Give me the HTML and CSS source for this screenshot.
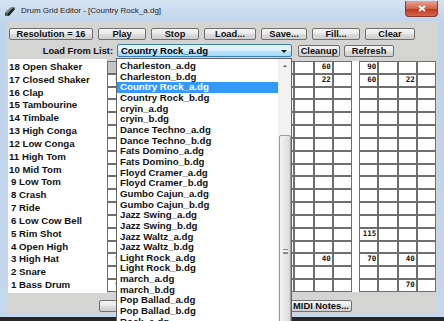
FILE: index.html
```html
<!DOCTYPE html>
<html lang="en">
<head>
  <meta charset="UTF-8">
  <title>Drum Grid Editor</title>
  <link rel="stylesheet" href="styles.css">
</head>
<body>
  <div class="window">
    <div class="titlebar">
      <svg class="app-icon" viewBox="0 0 11 10" width="11" height="10">
        <path d="M0 6 L6 1 L10 1 L10 3 L3 9 L0 9 Z" fill="#7d8f86"/>
        <path d="M1 9 L8 2 L10 3 L4 10 Z" fill="#1c1c1c"/>
        <rect x="0" y="7" width="3" height="3" fill="#2f6f3a"/>
      </svg>
      <span class="title">Drum Grid Editor - [Country Rock_a.dg]</span>
      <div class="close-btn">
        <svg viewBox="0 0 8 7" width="8" height="7">
          <path d="M1 1 L7 6 M7 1 L1 6" stroke="#fff" stroke-width="1.8"/>
        </svg>
      </div>
    </div>

    <div class="client">
      <div class="toolbar">
        <button class="btn w-res">Resolution = 16</button>
        <button class="btn w-play">Play</button>
        <button class="btn w-stop">Stop</button>
        <button class="btn w-load">Load...</button>
        <button class="btn w-save">Save...</button>
        <button class="btn w-fill">Fill...</button>
        <button class="btn w-clear">Clear</button>
      </div>

      <div class="load-row">
        <span class="load-label">Load From List:</span>
        <div class="combo">
          <span>Country Rock_a.dg</span>
          <span class="combo-arrow"></span>
        </div>
        <button class="btn w-cleanup">Cleanup</button>
        <button class="btn w-refresh">Refresh</button>
      </div>

      <div class="editor">
        <ul class="names" id="names"></ul>
        <div class="grid" id="grid"></div>
      </div>

      <div class="bottom-bar">
        <button class="btn w-random">Random...</button>
        <button class="btn w-midi">MIDI Notes...</button>
      </div>

      <div class="drop-list">
        <ul class="drop-items" id="dropItems"></ul>
        <div class="scrollbar">
          <div class="scroll-up"></div>
          <div class="scroll-thumb"><span class="grip"></span></div>
        </div>
      </div>
    </div>
  </div>

  <script>
    var names = ["18 Open Shaker", "17 Closed Shaker", "16 Clap", "15 Tambourine", "14 Timbale",
      "13 High Conga", "12 Low Conga", "11 High Tom", "10 Mid Tom", "9 Low Tom", "8 Crash",
      "7 Ride", "6 Low Cow Bell", "5 Rim Shot", "4 Open High", "3 High Hat", "2 Snare", "1 Bass Drum"];

    // row -> { column: value }
    var hits = {
      0: { 2: "60", 4: "90", 10: "60", 12: "90" },
      1: { 0: "60", 2: "22", 4: "60", 6: "22", 8: "60", 10: "22", 12: "60", 14: "22" },
      13: { 12: "115" },
      15: { 0: "90", 2: "40", 4: "70", 6: "40", 8: "90", 10: "40", 12: "70", 14: "40" },
      17: { 0: "90", 4: "70", 8: "90", 14: "70" }
    };

    var styles = ["Charleston_a.dg", "Charleston_b.dg", "Country Rock_a.dg", "Country Rock_b.dg",
      "cryin_a.dg", "cryin_b.dg", "Dance Techno_a.dg", "Dance Techno_b.dg", "Fats Domino_a.dg",
      "Fats Domino_b.dg", "Floyd Cramer_a.dg", "Floyd Cramer_b.dg", "Gumbo Cajun_a.dg",
      "Gumbo Cajun_b.dg", "Jazz Swing_a.dg", "Jazz Swing_b.dg", "Jazz Waltz_a.dg", "Jazz Waltz_b.dg",
      "Light Rock_a.dg", "Light Rock_b.dg", "march_a.dg", "march_b.dg", "Pop Ballad_a.dg",
      "Pop Ballad_b.dg", "Rock_a.dg"];

    var nameList = document.getElementById("names");
    names.forEach(function (n) {
      var li = document.createElement("li");
      li.textContent = n;
      if (n.indexOf(" ") === 1) li.className = "single";
      nameList.appendChild(li);
    });

    var grid = document.getElementById("grid");
    for (var g = 0; g < 4; g++) {
      var group = document.createElement("div");
      group.className = "group";
      for (var r = 0; r < names.length; r++) {
        for (var c = 0; c < 4; c++) {
          var col = g * 4 + c;
          var cell = document.createElement("div");
          cell.className = "cell";
          if (r === 0 && col === 0) cell.className += " cursor";
          if (hits[r] && hits[r][col]) cell.textContent = hits[r][col];
          group.appendChild(cell);
        }
      }
      grid.appendChild(group);
    }

    var drop = document.getElementById("dropItems");
    styles.forEach(function (s) {
      var li = document.createElement("li");
      li.textContent = s;
      if (s === "Country Rock_a.dg") li.className = "selected";
      drop.appendChild(li);
    });
  </script>
</body>
</html>
```

FILE: styles.css
```css
* {
  box-sizing: border-box;
}

html, body {
  margin: 0;
  height: 100%;
  overflow: hidden;
}

body {
  background: #262626;
  font-family: "Liberation Sans", Arial, sans-serif;
}

.window {
  width: 444px;
  height: 317px;
  padding: 0 7px 4px 7px;
  display: flex;
  flex-direction: column;
  background: linear-gradient(#d6e3f2, #bfd4eb 22px, #c3d7ed);
}

/* title bar */
.titlebar {
  height: 21px;
  display: flex;
  align-items: center;
}

.app-icon {
  margin: 0 5px 0 -2px;
}

.title {
  font-size: 8px;
  color: #1e1e1e;
}

.close-btn {
  align-self: flex-start;
  margin: 1px -1px 0 auto;
  width: 33px;
  height: 16px;
  border: 1px solid #8a3a2c;
  border-top: none;
  border-radius: 0 0 4px 4px;
  background: linear-gradient(#e8a493, #d0644c 50%, #c0391f 55%, #d3674c);
  display: flex;
  align-items: center;
  justify-content: center;
}

/* client area */
.client {
  flex: 1;
  position: relative;
  background: #d4d4d2;
  display: flex;
  flex-direction: column;
}

.btn {
  height: 12px;
  padding: 0;
  border: 1px solid #707070;
  border-radius: 2px;
  background: linear-gradient(#f4f4f4, #eaeaea 50%, #dcdcdc 51%, #cfcfcf);
  font-family: "Liberation Sans", Arial, sans-serif;
  font-size: 9.3px;
  font-weight: bold;
  line-height: 10px;
  color: #111;
}

.toolbar {
  display: flex;
  gap: 5px;
  margin: 7px 0 0 2px;
}

.w-res { width: 84px; }
.w-play { width: 48px; }
.w-stop { width: 48px; }
.w-load { width: 52px; }
.w-save { width: 46px; }
.w-fill { width: 48px; }
.w-clear { width: 50px; }
.w-cleanup { width: 42px; margin-left: 6px; }
.w-refresh { width: 50px; margin-left: 4px; }
.w-random { width: 90px; margin-left: 92px; }
.w-midi { width: 62px; margin-left: 101px; }

.load-row {
  display: flex;
  align-items: center;
  margin-top: 4px;
  height: 13px;
}

.load-label {
  width: 104px;
  margin: 0 4px 0 2px;
  text-align: right;
  font-size: 9.3px;
  font-weight: bold;
  color: #111;
}

.combo {
  width: 175px;
  height: 13px;
  border: 1px solid #3c7fb1;
  border-radius: 2px;
  background: linear-gradient(#eaf6fd, #d9f0fc 50%, #bee6fd 51%, #a7d9f5);
  display: flex;
  align-items: center;
  padding-left: 3px;
  font-size: 9.5px;
  font-weight: bold;
  color: #000;
}

.combo-arrow {
  margin: 1px 4px 0 auto;
  border-left: 3px solid transparent;
  border-right: 3px solid transparent;
  border-top: 3px solid #1a1a1a;
}

/* drum grid */
.editor {
  display: flex;
  height: 234px;
  margin-top: 2px;
}

.names {
  list-style: none;
  margin: 0 0 0 1px;
  padding: 2px 0 0 1px;
  width: 99px;
  background: #fff;
  font-size: 9.7px;
  font-weight: bold;
  color: #111;
}

.names li {
  height: 12.83px;
  line-height: 12.83px;
  white-space: nowrap;
}

.names li.single {
  padding-left: 2px;
}

.grid {
  display: flex;
  gap: 7px;
  align-self: flex-start;
  margin-top: 2px;
  background: #fff;
}

.group {
  display: grid;
  grid-template-columns: repeat(4, 17.25px);
  grid-auto-rows: 10.83px;
  gap: 2px;
  padding: 1px;
  background: #6e6e6e;
}

.cell {
  background: #fff;
  font-family: "DejaVu Sans Mono", monospace;
  font-size: 7.5px;
  font-weight: bold;
  line-height: 10.83px;
  text-align: right;
  padding-right: 1px;
  color: #111;
}

.cell.cursor {
  background: #c4c4c4;
}

.bottom-bar {
  display: flex;
  margin-top: 7px;
}

/* open dropdown list, lies over the grid */
.drop-list {
  position: absolute;
  left: 109px;
  top: 37px;
  width: 176px;
  height: 280px;
  border: 1px solid #646464;
  background: #fff;
  display: flex;
}

.drop-items {
  list-style: none;
  margin: 0;
  padding: 2px 0 0 0;
  flex: 1;
  font-size: 9.7px;
  font-weight: bold;
  color: #111;
}

.drop-items li {
  height: 10.67px;
  line-height: 10.67px;
  padding-left: 3px;
  white-space: nowrap;
}

.drop-items li.selected {
  background: #3399ff;
  color: #fff;
}

.scrollbar {
  width: 13px;
  position: relative;
  background: #f3f3f3;
  border-left: 1px solid #ececec;
}

.scroll-up {
  margin: 6px auto 0;
  width: 0;
  border-left: 2px solid transparent;
  border-right: 2px solid transparent;
  border-bottom: 2px solid #555;
}

.scroll-thumb {
  position: absolute;
  left: 0;
  right: 0;
  top: 76px;
  height: 232px;
  border: 1px solid #9b9b9b;
  border-radius: 2px;
  background: linear-gradient(90deg, #f2f2f2, #e6e6e6 60%, #d9d9d9);
}

.grip {
  position: absolute;
  left: 3px;
  top: 113px;
  width: 5px;
  height: 5px;
  border-top: 1px solid #8a8a8a;
  border-bottom: 1px solid #8a8a8a;
  background: linear-gradient(#fff 1px, #8a8a8a 1px, #8a8a8a 2px, #fff 2px);
  background-size: 5px 2px;
  background-position: 0 1px;
  background-repeat: no-repeat;
}
```
